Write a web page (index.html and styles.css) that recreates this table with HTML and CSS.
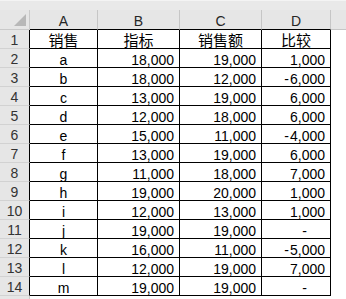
FILE: index.html
```html
<!DOCTYPE html>
<html lang="zh-CN">
<head>
<meta charset="utf-8">
<title>Sheet</title>
<link rel="stylesheet" href="styles.css">
</head>
<body>
<div class="topbar"></div>
<div class="sheet">
  <div class="corner"><svg class="tri" width="12" height="12" viewBox="0 0 12 12"><polygon points="12,0 12,12 0,12" fill="#b8b8b8"/></svg></div>
  <div class="colhead">A</div>
  <div class="colhead">B</div>
  <div class="colhead">C</div>
  <div class="colhead">D</div>
  <div class="colhead extra"></div>

  <div class="rowhead">1</div><div class="cell ctr cjk">销售</div><div class="cell ctr cjk">指标</div><div class="cell ctr cjk">销售额</div><div class="cell ctr cjk">比较</div><div class="blank"></div>
  <div class="rowhead">2</div><div class="cell ctr">a</div><div class="cell num">18,000</div><div class="cell num">19,000</div><div class="cell num">1,000</div><div class="blank"></div>
  <div class="rowhead">3</div><div class="cell ctr">b</div><div class="cell num">18,000</div><div class="cell num">12,000</div><div class="cell num"><span class="minus">-</span>6,000</div><div class="blank"></div>
  <div class="rowhead">4</div><div class="cell ctr">c</div><div class="cell num">13,000</div><div class="cell num">19,000</div><div class="cell num">6,000</div><div class="blank"></div>
  <div class="rowhead">5</div><div class="cell ctr">d</div><div class="cell num">12,000</div><div class="cell num">18,000</div><div class="cell num">6,000</div><div class="blank"></div>
  <div class="rowhead">6</div><div class="cell ctr">e</div><div class="cell num">15,000</div><div class="cell num">11,000</div><div class="cell num"><span class="minus">-</span>4,000</div><div class="blank"></div>
  <div class="rowhead">7</div><div class="cell ctr">f</div><div class="cell num">13,000</div><div class="cell num">19,000</div><div class="cell num">6,000</div><div class="blank"></div>
  <div class="rowhead">8</div><div class="cell ctr">g</div><div class="cell num">11,000</div><div class="cell num">18,000</div><div class="cell num">7,000</div><div class="blank"></div>
  <div class="rowhead">9</div><div class="cell ctr">h</div><div class="cell num">19,000</div><div class="cell num">20,000</div><div class="cell num">1,000</div><div class="blank"></div>
  <div class="rowhead">10</div><div class="cell ctr">i</div><div class="cell num">12,000</div><div class="cell num">13,000</div><div class="cell num">1,000</div><div class="blank"></div>
  <div class="rowhead">11</div><div class="cell ctr">j</div><div class="cell num">19,000</div><div class="cell num">19,000</div><div class="cell num"><span class="zero">-</span></div><div class="blank"></div>
  <div class="rowhead">12</div><div class="cell ctr">k</div><div class="cell num">16,000</div><div class="cell num">11,000</div><div class="cell num"><span class="minus">-</span>5,000</div><div class="blank"></div>
  <div class="rowhead">13</div><div class="cell ctr">l</div><div class="cell num">12,000</div><div class="cell num">19,000</div><div class="cell num">7,000</div><div class="blank"></div>
  <div class="rowhead">14</div><div class="cell ctr">m</div><div class="cell num">19,000</div><div class="cell num">19,000</div><div class="cell num"><span class="zero">-</span></div><div class="blank"></div>
  <div class="rowhead tail"></div><div class="blank"></div><div class="blank"></div><div class="blank"></div><div class="blank"></div><div class="blank"></div>
</div>
</body>
</html>
```

FILE: styles.css
```css
html, body {
  margin: 0;
  padding: 0;
  background: #ffffff;
  overflow: hidden;
}

body {
  width: 346px;
  height: 299px;
  font-family: "Liberation Sans", Arial, "Noto Sans CJK SC", sans-serif;
  font-size: 14px;
  color: #000;
}

.topbar {
  height: 10px;
  background: #e9e9e9;
  border-top: 1px solid #f4f4f4;
  box-sizing: border-box;
}

.sheet {
  display: grid;
  grid-template-columns: 30px 68px 82px 82px 69px 15px;
  grid-template-rows: 20px repeat(14, 19px) 3px;
}

.sheet > div {
  box-sizing: border-box;
  white-space: nowrap;
  overflow: hidden;
}

.corner {
  background: #e6e6e6;
  border-right: 1px solid #c9c9c9;
  border-bottom: 1px solid #c9c9c9;
  display: flex;
  justify-content: flex-end;
  align-items: flex-end;
  padding: 0 3px 3px 0;
}

.tri {
  display: block;
}

.colhead {
  background: #e6e6e6;
  border-right: 1px solid #c6c6c6;
  border-bottom: 1px solid #000;
  text-align: center;
  color: #262626;
  padding-top: 4px;
  line-height: 14px;
}

.colhead.extra {
  border-right: none;
  border-bottom: 1px solid #c6c6c6;
}

.rowhead {
  background: #e6e6e6;
  border-right: 1px solid #000;
  border-bottom: 1px solid #d2d2d2;
  text-align: center;
  color: #333;
  padding-top: 3px;
  line-height: 14px;
}

.rowhead.tail {
  border-right: 1px solid #c9c9c9;
  border-bottom: none;
}

.cell {
  border-right: 1px solid #000;
  border-bottom: 1px solid #000;
  padding-top: 4px;
  line-height: 14px;
}

.ctr {
  text-align: center;
}

.num {
  text-align: right;
  padding-right: 5px;
}

.cjk {
  font-family: "Noto Sans CJK SC", sans-serif;
  font-size: 15px;
  padding-top: 2px;
  line-height: 16px;
}

.minus {
  margin-right: 1px;
}

.zero {
  margin-right: 18px;
}

.blank {
  background: #fff;
}
```
